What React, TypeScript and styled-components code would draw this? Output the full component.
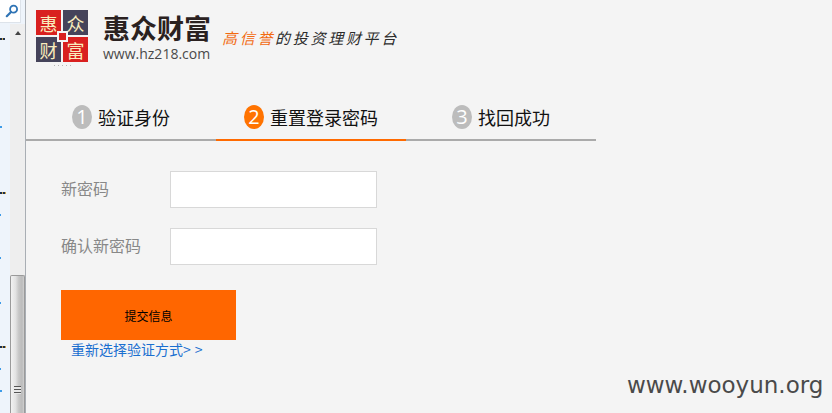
import styled, { createGlobalStyle } from "styled-components";

const GlobalStyle = createGlobalStyle`
  html, body {
    margin: 0;
    padding: 0;
    height: 100%;
    overflow: hidden;
    background: #f4f4f4;
  }
  #root {
    height: 100%;
  }
`;

const cjk = `"Noto Sans CJK SC", "Liberation Sans", sans-serif`;

const steps = [
  { num: "1", label: "验证身份", active: false },
  { num: "2", label: "重置登录密码", active: true },
  { num: "3", label: "找回成功", active: false },
];

const logoTiles = [
  { char: "惠", red: true },
  { char: "众", red: false },
  { char: "财", red: false },
  { char: "富", red: true },
];

const sideDots = [
  { top: 38, width: 5 },
  { top: 126, width: 2 },
  { top: 192, width: 6 },
  { top: 214, width: 1 },
  { top: 257, width: 1 },
  { top: 302, width: 1 },
  { top: 346, width: 6 },
  { top: 368, width: 1 },
  { top: 390, width: 2 },
];

export default function App() {
  return (
    <Page>
      <GlobalStyle />
      <Sidebar>
        <SearchBox>
          <SearchIcon width="14" height="14" viewBox="0 0 14 14" aria-hidden="true">
            <circle cx="8.6" cy="5.2" r="3.5" fill="none" stroke="#2f74b5" strokeWidth="1.8" />
            <path d="M6 8 L1.8 12.2" stroke="#2f74b5" strokeWidth="2.2" strokeLinecap="round" />
          </SearchIcon>
        </SearchBox>
        <SideBody>
          <TreeStrip>
            {sideDots.map((dot) => (
              <TreeDot key={dot.top} $top={dot.top} $width={dot.width} />
            ))}
          </TreeStrip>
          <ScrollTrack>
            <ScrollArrow />
            <ScrollThumb>
              <ThumbGrip />
            </ScrollThumb>
          </ScrollTrack>
        </SideBody>
      </Sidebar>

      <Main>
        <Header>
          <Logo>
            {logoTiles.map((tile) => (
              <LogoTile key={tile.char} $red={tile.red}>
                {tile.char}
              </LogoTile>
            ))}
            <LogoCenter />
            <LogoCrumbs />
          </Logo>
          <Brand>
            <BrandName>惠众财富</BrandName>
            <BrandUrl>www.hz218.com</BrandUrl>
          </Brand>
          <Slogan>
            <SloganAccent>高信誉</SloganAccent>的投资理财平台
          </Slogan>
        </Header>

        <Steps>
          {steps.map((step) => (
            <Step key={step.num} $active={step.active}>
              <StepNum $active={step.active}>{step.num}</StepNum>
              <StepLabel>{step.label}</StepLabel>
            </Step>
          ))}
        </Steps>

        <Form>
          <Field>
            <FieldLabel>新密码</FieldLabel>
            <FieldInput type="password" />
          </Field>
          <Field>
            <FieldLabel>确认新密码</FieldLabel>
            <FieldInput type="password" />
          </Field>
          <SubmitButton type="button">提交信息</SubmitButton>
          <BackLink href="#">
            重新选择验证方式<LinkArrows>&gt;&gt;</LinkArrows>
          </BackLink>
        </Form>
      </Main>

      <Watermark>www.wooyun.org</Watermark>
    </Page>
  );
}

const Page = styled.div`
  position: relative;
  display: flex;
  width: 832px;
  height: 413px;
  overflow: hidden;
  background: #f4f4f4;
  font-family: ${cjk};
`;

const Sidebar = styled.aside`
  display: flex;
  flex-direction: column;
  flex: none;
  width: 25px;
  border-right: 1px solid #a9aeb4;
  background: #eef4fb;
`;

const SearchBox = styled.div`
  display: flex;
  align-items: center;
  justify-content: flex-end;
  width: 21px;
  height: 23px;
  padding-right: 1px;
  box-sizing: border-box;
  border-right: 1px solid #dde3ea;
  border-bottom: 1px solid #dde3ea;
  background: #ffffff;
`;

const SearchIcon = styled.svg`
  display: block;
`;

const SideBody = styled.div`
  display: flex;
  flex: 1;
  min-height: 0;
  margin-top: 1px;
`;

const TreeStrip = styled.div`
  position: relative;
  width: 10px;
  flex: none;
`;

const TreeDot = styled.span<{ $top: number; $width: number }>`
  position: absolute;
  left: 0;
  top: ${({ $top }) => $top - 24}px;
  width: ${({ $width }) => $width}px;
  height: 2px;
  background: ${({ $width }) =>
    $width > 2 ? "repeating-linear-gradient(90deg, #1b2f4d 0 2px, #c9a24a 2px 3px)" : "#3d9be8"};
`;

const ScrollTrack = styled.div`
  display: flex;
  flex-direction: column;
  flex: 1;
  background: #eeeeee;
`;

const ScrollArrow = styled.span`
  flex: none;
  align-self: center;
  width: 0;
  height: 0;
  margin-top: 7px;
  border-left: 3.5px solid transparent;
  border-right: 3.5px solid transparent;
  border-bottom: 4px solid #444444;
`;

const ScrollThumb = styled.div`
  display: flex;
  flex-direction: column;
  justify-content: flex-end;
  align-items: center;
  height: 138px;
  margin-top: auto;
  padding-bottom: 19px;
  box-sizing: border-box;
  border: 1px solid #9a9a9a;
  border-bottom: none;
  border-radius: 2px 2px 0 0;
  background: linear-gradient(90deg, #f2f2f2 0%, #e2e2e2 35%, #c6c6c6 60%, #bbbbbb 85%, #d0d0d0 100%);
`;

const ThumbGrip = styled.span`
  width: 7px;
  height: 8px;
  background: repeating-linear-gradient(180deg, #555555 0 1px, #e8e8e8 1px 3px);
`;

const Main = styled.main`
  display: flex;
  flex-direction: column;
  flex: none;
  width: 570px;
`;

const Header = styled.header`
  display: flex;
  align-items: flex-start;
  height: 105px;
  padding: 10px 0 0 10px;
  box-sizing: border-box;
`;

const Logo = styled.div`
  position: relative;
  display: grid;
  grid-template-columns: 25px 25px;
  grid-template-rows: 25px 25px;
  gap: 2px;
  flex: none;
  width: 52px;
  height: 52px;
`;

const LogoTile = styled.span<{ $red: boolean }>`
  display: flex;
  align-items: center;
  justify-content: center;
  background: ${({ $red }) => ($red ? "#d9201f" : "#45435a")};
  color: #f9ecbc;
  font-size: 18px;
  line-height: 1;
`;

const LogoCenter = styled.span`
  position: absolute;
  left: 21px;
  top: 21px;
  width: 7px;
  height: 7px;
  border: 2px solid #f4f4f4;
  background: #d9201f;
`;

const LogoCrumbs = styled.span`
  position: absolute;
  left: 18px;
  top: 55px;
  width: 18px;
  height: 1px;
  background: repeating-linear-gradient(90deg, #b5b5b5 0 1px, transparent 1px 4px);
`;

const Brand = styled.div`
  display: flex;
  flex-direction: column;
  flex: none;
  margin-left: 15px;
`;

const BrandName = styled.h1`
  margin: 0;
  color: #2a2120;
  font-size: 27px;
  font-weight: 700;
  line-height: 35px;
`;

const BrandUrl = styled.span`
  color: #4a4a4a;
  font-family: "Open Sans", sans-serif;
  font-size: 14px;
  line-height: 18px;
`;

const Slogan = styled.p`
  margin: 18px 0 0 11px;
  color: #2c2c2c;
  font-size: 15px;
  font-style: italic;
  letter-spacing: 2.7px;
  line-height: 20px;
  white-space: nowrap;
`;

const SloganAccent = styled.span`
  color: #f26a10;
`;

const Steps = styled.div`
  display: flex;
  flex: none;
  height: 36px;
  box-sizing: border-box;
`;

const Step = styled.div<{ $active: boolean }>`
  display: flex;
  align-items: flex-start;
  justify-content: center;
  gap: 6px;
  flex: none;
  width: 190px;
  box-sizing: border-box;
  border-bottom: 2px solid ${({ $active }) => ($active ? "#ff6a00" : "#aaaaaa")};
`;

const StepNum = styled.span<{ $active: boolean }>`
  display: flex;
  align-items: center;
  justify-content: center;
  flex: none;
  width: 20px;
  height: 24px;
  border-radius: 50%;
  background: ${({ $active }) => ($active ? "#ff7300" : "#bcbcbc")};
  color: #ffffff;
  font-family: "Open Sans", sans-serif;
  font-size: 20px;
  line-height: 24px;
`;

const StepLabel = styled.span`
  color: #111111;
  font-size: 18px;
  line-height: 25px;
`;

const Form = styled.form`
  display: flex;
  flex-direction: column;
  align-items: flex-start;
  padding: 30px 0 0 35px;
`;

const Field = styled.label`
  display: flex;
  align-items: center;
  margin-bottom: 20px;
`;

const FieldLabel = styled.span`
  flex: none;
  width: 109px;
  padding-bottom: 3px;
  color: #888888;
  font-size: 16px;
  line-height: 22px;
`;

const FieldInput = styled.input`
  display: block;
  width: 207px;
  height: 37px;
  padding: 0;
  box-sizing: border-box;
  border: 1px solid #d8d8d8;
  background: #ffffff;
  outline: none;
`;

const SubmitButton = styled.button`
  display: block;
  width: 175px;
  height: 50px;
  margin-top: 5px;
  padding: 0;
  border: none;
  background: #ff6600;
  color: #000000;
  font-family: ${cjk};
  font-size: 12px;
  cursor: pointer;
`;

const BackLink = styled.a`
  display: block;
  margin: 0 0 0 10px;
  color: #1a6fd0;
  font-size: 14px;
  line-height: 19px;
  text-decoration: none;
`;

const LinkArrows = styled.span`
  letter-spacing: 4px;
`;

const Watermark = styled.span`
  position: absolute;
  left: 627px;
  top: 370px;
  color: #4a4a4a;
  font-family: "DejaVu Sans", sans-serif;
  font-size: 23px;
  line-height: 30px;
`;
